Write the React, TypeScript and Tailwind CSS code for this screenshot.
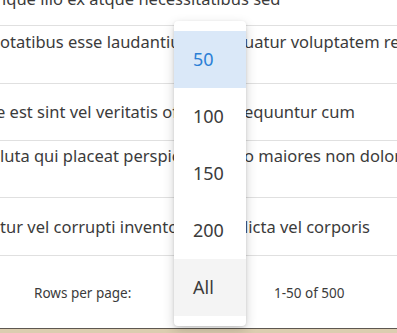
import React from "react";

const rows: { left: string; right: string; h: number; pt: number; lml?: number }[] = [
  { left: "otatibus esse laudantium", right: "uatur voluptatem repellendus", h: 58, pt: 5 },
  { left: "e est sint vel veritatis officiis", right: "equuntur cum", h: 57, pt: 17, lml: -4 },
  { left: "luta qui placeat perspiciatis", right: "o maiores non dolorem", h: 57, pt: 4 },
  { left: "tur vel corrupti inventore", right: "licta vel corporis", h: 58, pt: 18 },
];

const items = ["50", "100", "150", "200", "All"];

export default function App() {
  return (
    <div
      className="relative w-[397px] h-[333px] overflow-hidden bg-white text-[#3b3b3b]"
      style={{ fontFamily: '"Noto Sans", "Open Sans", sans-serif' }}
    >
      <div className="flex flex-col">
        <div className="h-[26px] border-b border-[#e0e0e0] overflow-hidden">
          <div className="-mt-[12px] text-[16.5px] leading-[22px] whitespace-nowrap pl-[2px]">
            ique illo ex atque necessitatibus sed
          </div>
        </div>
        {rows.map((r, i) => (
          <div
            key={i}
            className="flex border-b border-[#e0e0e0] text-[16.5px] leading-[22px] whitespace-nowrap overflow-hidden"
            style={{ height: r.h, paddingTop: r.pt }}
          >
            <div className="w-[244px] shrink-0 overflow-hidden">
              <span style={{ marginLeft: r.lml ?? 0 }} className="inline-block">
                {r.left}
              </span>
            </div>
            <div className="shrink-0">{r.right}</div>
          </div>
        ))}
        <div className="h-[72px] flex items-center text-[13.5px] text-[#3b3b3b] pt-[2px]">
          <div className="w-[34px]" />
          <div className="w-[240px]">Rows per page:</div>
          <div>1-50 of 500</div>
        </div>
        <div className="h-[1px] bg-[#5d5750]" />
        <div className="h-[4px] bg-[#dccdb0]" />
      </div>

      <div className="absolute left-[174px] top-[21px] w-[72px] bg-white rounded-[4px] shadow-[0_4px_12px_rgba(0,0,0,0.18),0_1px_3px_rgba(0,0,0,0.12)] py-[10px]">
        {items.map((it, i) => (
          <div
            key={it}
            className={
              "h-[57px] flex items-center pl-[19px] text-[18px] " +
              (i === 0
                ? "bg-[#dae8f8] text-[#2b7fd6]"
                : i === 4
                ? "bg-[#f4f4f4] text-[#3b3b3b]"
                : "text-[#3b3b3b]")
            }
          >
            {it}
          </div>
        ))}
      </div>
    </div>
  );
}
